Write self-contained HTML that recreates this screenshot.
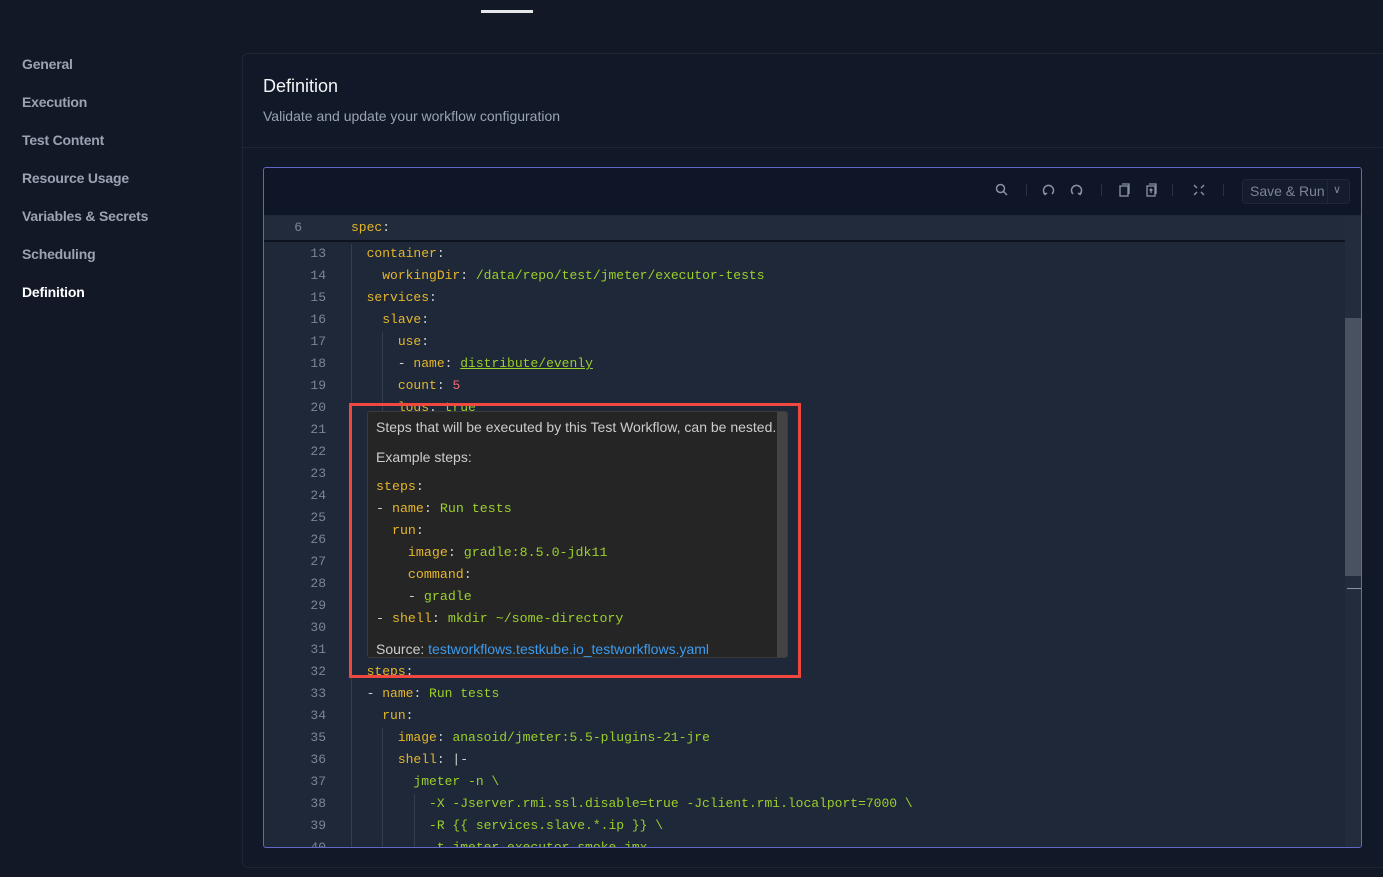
<!DOCTYPE html>
<html><head><meta charset="utf-8"><style>
*{margin:0;padding:0;box-sizing:border-box}
body{width:1383px;height:877px;background:#121826;overflow:hidden;position:relative;font-family:"Liberation Sans",sans-serif}
.nav{position:absolute;left:22px;font-size:14px;font-weight:bold;color:#9aa3b2;letter-spacing:-0.2px}
.card{position:absolute;left:242px;top:53px;width:1150px;height:815px;border:1px solid #1e2533;border-radius:6px;background:#111827}
.ed{position:absolute;left:263px;top:167px;width:1099px;height:681px;border:1px solid #6366c9;border-radius:3px;background:#1e2838;overflow:hidden}
.tb{position:absolute;left:0;top:0;width:100%;height:47px;background:#0f1627}
.ln{position:absolute;left:0;width:62px;text-align:right;font:13px "Liberation Mono",monospace;color:#7d8594}
.cd{position:absolute;left:87px;font:13px "Liberation Mono",monospace;color:#d4d4d4;white-space:pre}
.k{color:#e5b62a}.s{color:#9bcf2a}.n{color:#f06b7a}
.tt{position:absolute;left:367px;top:411px;width:421px;height:247px;background:#252526;border:1px solid #3b3b3b;border-radius:3px;color:#cccccc;font-size:14px;overflow:hidden}
.tt .m{position:absolute;left:8px;font:13.3px "Liberation Mono",monospace;white-space:pre;color:#d4d4d4}
</style></head><body>
<div style="position:absolute;left:481px;top:10px;width:52px;height:3px;background:#e5e7eb"></div>
<div class="nav" style="top:56px">General</div>
<div class="nav" style="top:94px">Execution</div>
<div class="nav" style="top:132px">Test Content</div>
<div class="nav" style="top:170px">Resource Usage</div>
<div class="nav" style="top:208px">Variables &amp; Secrets</div>
<div class="nav" style="top:246px">Scheduling</div>
<div class="nav" style="top:284px;color:#fff">Definition</div>
<div class="card">
<div style="position:absolute;left:20px;top:22px;font-size:18px;color:#f3f4f6">Definition</div>
<div style="position:absolute;left:20px;top:54px;font-size:14px;color:#9aa3b2">Validate and update your workflow configuration</div>
<div style="position:absolute;left:0;top:93px;width:100%;height:1px;background:#1e2533"></div>
</div>
<div class="ed">
<div class="tb">
<svg style="position:absolute;left:730px;top:14px" width="16" height="16" viewBox="0 0 16 16" fill="none" stroke="#8b93a3" stroke-width="1.5"><circle cx="6.5" cy="6.5" r="4"/><path d="M9.5 9.5L13 13"/></svg>
<div style="position:absolute;left:762px;top:16px;width:1px;height:12px;background:#2a3242"></div>
<svg style="position:absolute;left:778px;top:15px" width="14" height="14" viewBox="0 0 14 14" fill="none" stroke="#8b93a3" stroke-width="1.5"><path d="M3 11A5 5 0 1 1 10 11"/><path d="M1.5 9.5L3 11.5 5 10"/></svg>
<svg style="position:absolute;left:805px;top:15px" width="14" height="14" viewBox="0 0 14 14" fill="none" stroke="#8b93a3" stroke-width="1.5"><path d="M4 11A5 5 0 1 1 11 11"/><path d="M12.5 9.5L11 11.5 9 10"/></svg>
<div style="position:absolute;left:837px;top:16px;width:1px;height:12px;background:#2a3242"></div>
<svg style="position:absolute;left:854px;top:15px" width="14" height="15" viewBox="0 0 14 15" fill="none" stroke="#8b93a3" stroke-width="1.3"><rect x="2" y="3" width="8" height="10"/><path d="M4 1h7v10"/></svg>
<svg style="position:absolute;left:881px;top:15px" width="14" height="15" viewBox="0 0 14 15" fill="none" stroke="#8b93a3" stroke-width="1.3"><rect x="2" y="3" width="8" height="10"/><path d="M4 1h7v10M6 6v4M4.5 7.5L6 6l1.5 1.5"/></svg>
<div style="position:absolute;left:908px;top:16px;width:1px;height:12px;background:#2a3242"></div>
<svg style="position:absolute;left:928px;top:15px" width="14" height="14" viewBox="0 0 14 14" fill="none" stroke="#8b93a3" stroke-width="1.4"><path d="M2 2l3 3M12 2L9 5M2 12l3-3M12 12L9 9"/></svg>
<div style="position:absolute;left:959px;top:16px;width:1px;height:12px;background:#2a3242"></div>
<div style="position:absolute;left:978px;top:11px;width:108px;height:25px;border:1px solid #1f2738;border-radius:4px;background:#141c2d;color:#7d8594;font-size:14px;line-height:23px;padding-left:7px">Save &amp; Run<span style="position:absolute;left:84px;top:0;width:1px;height:23px;background:#1f2738"></span><span style="position:absolute;left:90px;top:-1px;font-size:11px">&#8744;</span></div>
</div>
<div style="position:absolute;left:0;top:48px;width:1081px;height:26px;background:#212b3b;border-bottom:2px solid #0d1320"></div>
<div class="ln" style="top:52px;width:38px">6</div><div class="cd" style="top:52px"><span class="k">spec</span>:</div>
<div style="position:absolute;left:87px;top:76px;width:1px;height:620px;background:#333d4d"></div>
<div style="position:absolute;left:118px;top:164px;width:1px;height:80px;background:#333d4d"></div>
<div style="position:absolute;left:118px;top:560px;width:1px;height:130px;background:#333d4d"></div>
<div style="position:absolute;left:150px;top:626px;width:1px;height:70px;background:#333d4d"></div>
<div class="ln" style="top:78px">13</div><div class="cd" style="top:78px">  <span class="k">container</span>:</div>
<div class="ln" style="top:100px">14</div><div class="cd" style="top:100px">    <span class="k">workingDir</span>: <span class="s">/data/repo/test/jmeter/executor-tests</span></div>
<div class="ln" style="top:122px">15</div><div class="cd" style="top:122px">  <span class="k">services</span>:</div>
<div class="ln" style="top:144px">16</div><div class="cd" style="top:144px">    <span class="k">slave</span>:</div>
<div class="ln" style="top:166px">17</div><div class="cd" style="top:166px">      <span class="k">use</span>:</div>
<div class="ln" style="top:188px">18</div><div class="cd" style="top:188px">      - <span class="k">name</span>: <span class="s" style="text-decoration:underline">distribute/evenly</span></div>
<div class="ln" style="top:210px">19</div><div class="cd" style="top:210px">      <span class="k">count</span>: <span class="n">5</span></div>
<div class="ln" style="top:232px">20</div><div class="cd" style="top:232px">      <span class="k">logs</span>: <span class="s">true</span></div>
<div class="ln" style="top:254px">21</div><div class="ln" style="top:276px">22</div><div class="ln" style="top:298px">23</div><div class="ln" style="top:320px">24</div><div class="ln" style="top:342px">25</div><div class="ln" style="top:364px">26</div><div class="ln" style="top:386px">27</div><div class="ln" style="top:408px">28</div><div class="ln" style="top:430px">29</div><div class="ln" style="top:452px">30</div><div class="ln" style="top:474px">31</div>
<div class="ln" style="top:496px">32</div><div class="cd" style="top:496px">  <span class="k">steps</span>:</div>
<div class="ln" style="top:518px">33</div><div class="cd" style="top:518px">  - <span class="k">name</span>: <span class="s">Run tests</span></div>
<div class="ln" style="top:540px">34</div><div class="cd" style="top:540px">    <span class="k">run</span>:</div>
<div class="ln" style="top:562px">35</div><div class="cd" style="top:562px">      <span class="k">image</span>: <span class="s">anasoid/jmeter:5.5-plugins-21-jre</span></div>
<div class="ln" style="top:584px">36</div><div class="cd" style="top:584px">      <span class="k">shell</span>: |-</div>
<div class="ln" style="top:606px">37</div><div class="cd s" style="top:606px">        jmeter -n \</div>
<div class="ln" style="top:628px">38</div><div class="cd s" style="top:628px">          -X -Jserver.rmi.ssl.disable=true -Jclient.rmi.localport=7000 \</div>
<div class="ln" style="top:650px">39</div><div class="cd s" style="top:650px">          -R {{ services.slave.*.ip }} \</div>
<div class="ln" style="top:672px">40</div><div class="cd s" style="top:672px">          -t jmeter-executor-smoke.jmx</div>
<div style="position:absolute;left:1081px;top:48px;width:16px;height:640px;background:#222c3c"></div>
<div style="position:absolute;left:1081px;top:150px;width:16px;height:258px;background:#4a5261"></div>
<div style="position:absolute;left:1083px;top:420px;width:14px;height:1px;background:#8b93a3"></div>
</div>
<div style="position:absolute;left:349px;top:403px;width:452px;height:275px;border:3px solid #f0483e"></div>
<div class="tt">
<div style="position:absolute;left:8px;top:7px;white-space:nowrap">Steps that will be executed by this Test Workflow, can be nested.</div>
<div style="position:absolute;left:8px;top:37px">Example steps:</div>
<div class="m" style="top:67px"><span class="k">steps</span>:</div>
<div class="m" style="top:89px">- <span class="k">name</span>: <span class="s">Run tests</span></div>
<div class="m" style="top:111px">  <span class="k">run</span>:</div>
<div class="m" style="top:133px">    <span class="k">image</span>: <span class="s">gradle:8.5.0-jdk11</span></div>
<div class="m" style="top:155px">    <span class="k">command</span>:</div>
<div class="m" style="top:177px">    - <span class="s">gradle</span></div>
<div class="m" style="top:199px">- <span class="k">shell</span>: <span class="s">mkdir ~/some-directory</span></div>
<div style="position:absolute;left:8px;top:229px;white-space:nowrap">Source: <span style="color:#3b9cf0">testworkflows.testkube.io_testworkflows.yaml</span></div>
<div style="position:absolute;left:409px;top:0;width:10px;height:245px;background:#444"></div>
</div>
</body></html>
